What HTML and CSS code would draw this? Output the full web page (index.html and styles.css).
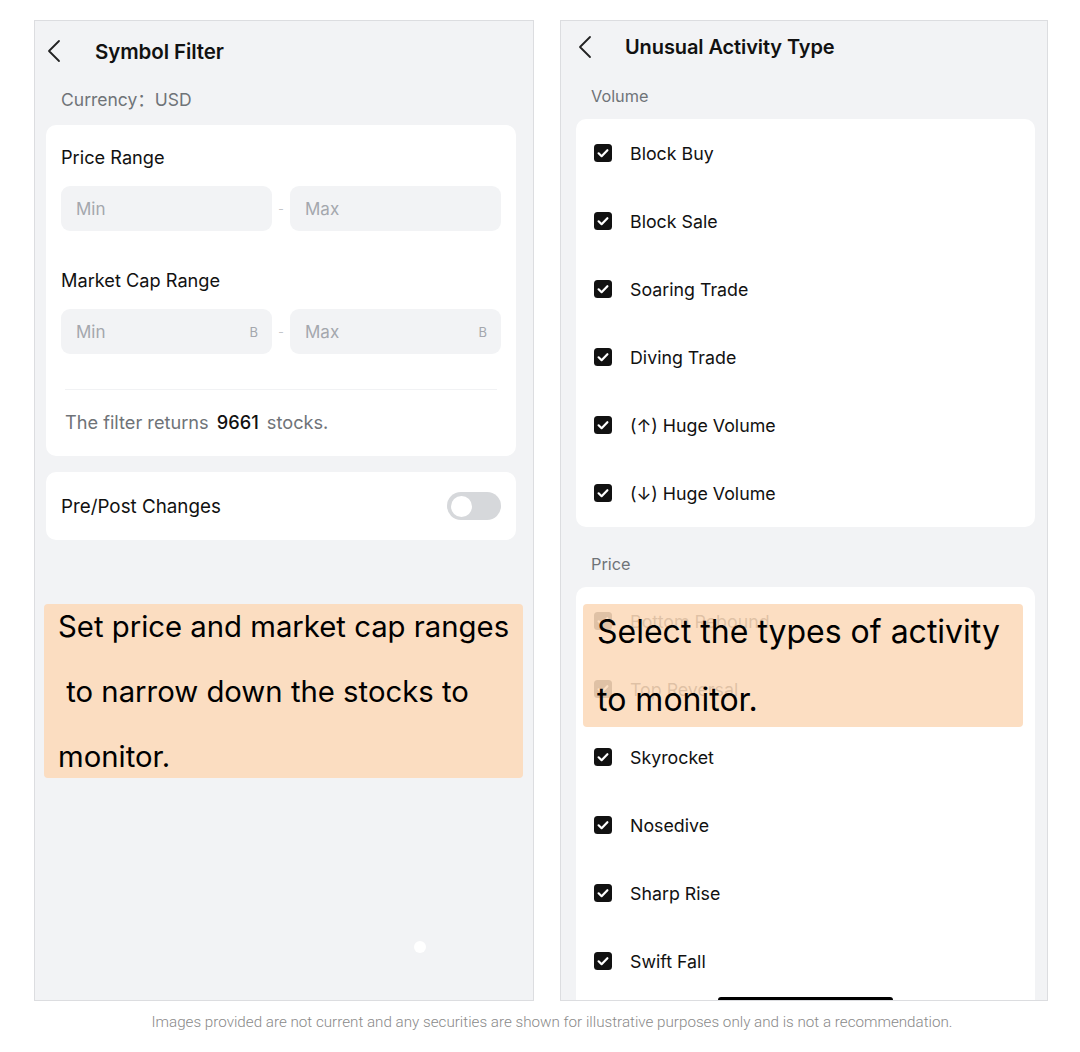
FILE: index.html
```html
<!DOCTYPE html>
<html lang="en">
<head>
  <meta charset="UTF-8">
  <meta name="viewport" content="width=device-width, initial-scale=1.0">
  <title>Symbol Filter</title>
  <link rel="stylesheet" href="styles.css">
</head>
<body>

  <div class="page">

    <div class="phone phone-left">
      <div class="nav">
        <svg class="back" viewBox="0 0 14 24" width="14" height="24"><path d="M12 2 L2 12 L12 22" /></svg>
        <h1 class="nav-title">Symbol Filter</h1>
      </div>
      <div class="currency">Currency：USD</div>

      <div class="card range-card">
        <div class="field-label">Price Range</div>
        <div class="range">
          <div class="input"><span>Min</span></div>
          <span class="dash">-</span>
          <div class="input"><span>Max</span></div>
        </div>

        <div class="field-label second">Market Cap Range</div>
        <div class="range">
          <div class="input"><span>Min</span><span class="unit">B</span></div>
          <span class="dash">-</span>
          <div class="input"><span>Max</span><span class="unit">B</span></div>
        </div>

        <div class="divider"></div>
        <div class="result">The filter returns <b>9661</b> stocks.</div>
      </div>

      <div class="card toggle-card">
        <span>Pre/Post Changes</span>
        <span class="switch"><span class="knob"></span></span>
      </div>

      <div class="tip tip-left">
        <p>Set price and market cap ranges<br>&nbsp;to narrow down the stocks to<br>monitor.</p>
      </div>
      <span class="dot"></span>
    </div>

    <div class="phone phone-right">
      <div class="nav nav-right">
        <svg class="back" viewBox="0 0 14 24" width="14" height="24"><path d="M12 2 L2 12 L12 22" /></svg>
        <h1 class="nav-title">Unusual Activity Type</h1>
      </div>

      <div class="section-label first">Volume</div>
      <div class="card list-card" id="volumeList"></div>

      <div class="section-label">Price</div>
      <div class="card list-card more" id="priceList"></div>

      <div class="tip tip-right">
        <p>Select the types of activity<br>to monitor.</p>
      </div>
      <span class="home-bar"></span>
    </div>

  </div>

  <p class="disclaimer">Images provided are not current and any securities are shown for illustrative purposes only and is not a recommendation.</p>

  <script>
    const volumeTypes = ['Block Buy', 'Block Sale', 'Soaring Trade', 'Diving Trade', '(↑) Huge Volume', '(↓) Huge Volume'];
    const priceTypes = ['Bottom Rebound', 'Top Reversal', 'Skyrocket', 'Nosedive', 'Sharp Rise', 'Swift Fall'];

    const checkIcon = '<svg class="check" viewBox="0 0 18 18" width="18" height="18">' +
      '<rect width="18" height="18" rx="3.5" fill="#111" />' +
      '<path d="M4.6 9.3 L7.6 12.2 L13.4 6.2" fill="none" stroke="#fff" stroke-width="2.2" stroke-linecap="round" stroke-linejoin="round" />' +
      '</svg>';

    function fillList(id, items) {
      const list = document.getElementById(id);
      items.forEach(item => {
        const row = document.createElement('div');
        row.className = 'list-item';
        row.innerHTML = checkIcon + '<span>' + item + '</span>';
        list.appendChild(row);
      });
    }

    fillList('volumeList', volumeTypes);
    fillList('priceList', priceTypes);
  </script>

</body>
</html>
```

FILE: styles.css
```css
body {
  margin: 0;
  background-color: #fff;
  font-family: Inter, "Noto Sans", "Noto Sans CJK SC", sans-serif;
  color: #111;
}
.page {
  display: flex;
  gap: 26px;
  padding: 20px 0 0 34px;
}
.phone {
  position: relative;
  box-sizing: border-box;
  height: 981px;
  border: 1px solid #dcdde0;
  background-color: #f2f3f5;
  overflow: hidden;
}
.phone-left {
  width: 500px;
  padding: 0 17px 0 11px;
}
.phone-right {
  width: 488px;
  padding: 0 12px 0 15px;
}
.nav {
  display: flex;
  align-items: center;
  height: 60px;
  padding-left: 1px;
}
.nav-right {
  height: 52px;
  padding-left: 2px;
}
.back {
  fill: none;
  stroke: #222;
  stroke-width: 1.8;
  stroke-linecap: round;
  stroke-linejoin: round;
}
.nav-title {
  margin: 0 0 0 34px;
  font-size: 20.5px;
  font-weight: 600;
  letter-spacing: -0.1px;
}
.nav-right .nav-title {
  margin-left: 33px;
  font-size: 20px;
}
.currency {
  padding: 7px 0 13px 15px;
  font-size: 17.5px;
  line-height: 24px;
  color: #6f7378;
}
.card {
  background-color: #fff;
  border-radius: 10px;
}
.range-card {
  padding: 20px 15px 22px;
}
.field-label {
  font-size: 18.2px;
  line-height: 24px;
  margin-bottom: 17px;
}
.field-label.second {
  margin-top: 37px;
}
.range {
  display: grid;
  grid-template-columns: 1fr 18px 1fr;
  align-items: center;
}
.input {
  display: flex;
  justify-content: space-between;
  align-items: center;
  height: 45px;
  padding: 0 14px 0 15px;
  background-color: #f2f3f5;
  border-radius: 9px;
  font-size: 17px;
  color: #a4a7ad;
}
.unit {
  font-size: 13px;
}
.dash {
  text-align: center;
  font-size: 12px;
  color: #c4c6ca;
}
.divider {
  height: 1px;
  margin: 35px 4px 20px;
  background-color: #f1f2f4;
}
.result {
  padding-left: 4px;
  font-size: 18.2px;
  line-height: 24px;
  color: #6f7378;
}
.result b {
  font-weight: 500;
  color: #111;
  margin: 0 3px;
}
.toggle-card {
  display: flex;
  justify-content: space-between;
  align-items: center;
  height: 68px;
  margin-top: 16px;
  padding: 0 15px;
  font-size: 18.8px;
}
.switch {
  display: flex;
  align-items: center;
  width: 54px;
  height: 28px;
  padding: 0 4px;
  box-sizing: border-box;
  border-radius: 14px;
  background-color: #d6d8db;
}
.knob {
  width: 21px;
  height: 21px;
  border-radius: 50%;
  background-color: #fff;
}
.section-label {
  padding: 25px 15px 11px;
  font-size: 16.3px;
  line-height: 24px;
  color: #6f7378;
}
.section-label.first {
  padding-top: 11px;
}
.list-card.more {
  padding-bottom: 40px;
}
.list-item {
  display: flex;
  align-items: center;
  gap: 18px;
  height: 68px;
  padding-left: 18px;
  font-size: 17.8px;
}
.check {
  flex-shrink: 0;
}
.tip {
  position: absolute;
  box-sizing: border-box;
  background-color: rgba(252, 217, 185, 0.88);
  border-radius: 4px;
}
.tip p {
  margin: 0;
  color: #000;
}
.tip-left {
  left: 9px;
  top: 583px;
  width: 479px;
  height: 174px;
  padding-left: 14px;
}
.tip-left p {
  font-size: 29.3px;
  line-height: 65px;
  margin-top: -10px;
}
.tip-right {
  left: 22px;
  top: 583px;
  width: 440px;
  height: 123px;
  padding-left: 14px;
}
.tip-right p {
  font-size: 32px;
  line-height: 68px;
  margin-top: -6px;
}
.dot {
  position: absolute;
  left: 379px;
  top: 920px;
  width: 12px;
  height: 12px;
  border-radius: 50%;
  background-color: #fff;
}
.home-bar {
  position: absolute;
  left: 157px;
  bottom: 0;
  width: 175px;
  height: 3px;
  border-radius: 3px 3px 0 0;
  background-color: #000;
}
.disclaimer {
  margin: 11px 0 0;
  padding-left: 24px;
  text-align: center;
  font-family: Roboto, "Liberation Sans", sans-serif;
  font-weight: 300;
  font-size: 15.2px;
  line-height: 20px;
  color: #8a8a8a;
}
```
